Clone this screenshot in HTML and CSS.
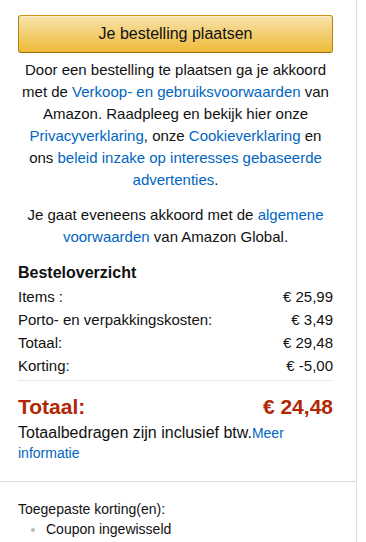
FILE: index.html
```html
<!DOCTYPE html>
<html lang="nl">
<head>
<meta charset="utf-8">
<link rel="stylesheet" href="styles.css">
</head>
<body>
<div class="panel">
  <div class="top">
    <button class="place-btn" type="button">Je bestelling plaatsen</button>
    <p class="legal">Door een bestelling te plaatsen ga je akkoord met de <a href="#">Verkoop- en gebruiksvoorwaarden</a> van Amazon. Raadpleeg en bekijk hier onze <a href="#">Privacyverklaring</a>, onze <a href="#">Cookieverklaring</a> en ons <a href="#">beleid inzake op interesses gebaseerde advertenties</a>.</p>
    <p class="legal">Je gaat eveneens akkoord met de <a href="#">algemene voorwaarden</a> van Amazon Global.</p>
    <h3 class="summary-title">Besteloverzicht</h3>
    <div class="rows">
      <div class="row"><span>Items :</span><span>€ 25,99</span></div>
      <div class="row"><span>Porto- en verpakkingskosten:</span><span>€ 3,49</span></div>
      <div class="row"><span>Totaal:</span><span>€ 29,48</span></div>
      <div class="row"><span>Korting:</span><span>€ -5,00</span></div>
    </div>
    <div class="total"><span>Totaal:</span><span>€ 24,48</span></div>
    <p class="vat">Totaalbedragen zijn inclusief btw.<a href="#">Meer informatie</a></p>
  </div>
  <div class="bottom">
    <div class="disc-title">Toegepaste korting(en):</div>
    <ul class="disc-list"><li>Coupon ingewisseld</li></ul>
  </div>
</div>
</body>
</html>
```
FILE: styles.css
```css
html, body { margin: 0; padding: 0; background: #fff; }
body {
  font-family: Arial, "Liberation Sans", sans-serif;
  color: #111;
  font-size: 15px;
}
a { color: #0066c0; text-decoration: none; }
.panel {
  width: 356px;
  min-height: 542px;
  border-right: 1px solid #ddd;
}
.top {
  padding: 15px 23px 18px 18px;
  border-bottom: 1px solid #ddd;
}
.place-btn {
  display: block;
  width: 315px;
  height: 38px;
  border: 1px solid;
  border-color: #c89411 #b0820f #99710d;
  border-radius: 3px;
  background: linear-gradient(to bottom, #f8e3ad, #eeba37);
  font-family: Arial, "Liberation Sans", sans-serif;
  font-size: 16px;
  color: #111;
  padding: 0;
  box-shadow: inset 0 1px 0 rgba(255,255,255,.4);
}
.legal {
  width: 315px;
  margin: 6px 0 0;
  text-align: center;
  font-size: 15px;
  line-height: 22px;
  color: #111;
}
.legal + .legal { margin-top: 13px; }
.summary-title {
  margin: 13px 0 0;
  font-size: 16px;
  font-weight: bold;
  line-height: 24px;
  color: #111;
}
.rows {
  width: 315px;
  padding-bottom: 3px;
  border-bottom: 1px solid #e7e7e7;
}
.row {
  display: flex;
  justify-content: space-between;
  font-size: 15px;
  line-height: 23px;
}
.total {
  width: 315px;
  display: flex;
  justify-content: space-between;
  margin-top: 14px;
  color: #b12704;
  font-weight: bold;
  font-size: 21px;
  line-height: 24px;
}
.vat {
  margin: 4px 0 0;
  font-size: 16px;
  line-height: 20px;
}
.vat a { font-size: 14px; }
.bottom {
  padding: 17px 18px;
}
.disc-title { font-size: 14px; line-height: 20px; }
.disc-list {
  margin: 0;
  padding-left: 28px;
  list-style: none;
}
.disc-list li { font-size: 14px; line-height: 21px; position: relative; }
.disc-list li::before {
  content: "";
  position: absolute;
  left: -15px;
  top: 9px;
  width: 4px;
  height: 4px;
  border-radius: 50%;
  background: #bbb;
}
```
